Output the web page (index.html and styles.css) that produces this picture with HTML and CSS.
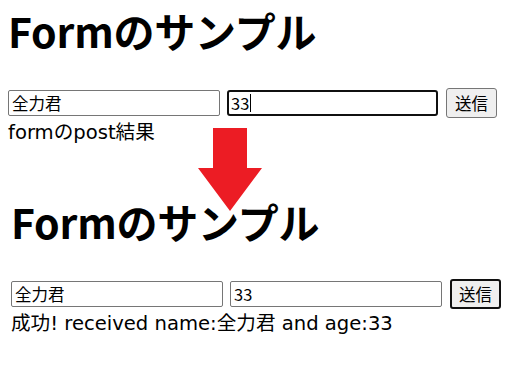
FILE: index.html
```html
<!DOCTYPE html>
<html lang="ja">
<head>
<meta charset="utf-8">
<link rel="stylesheet" href="styles.css">
</head>
<body>
<div class="stage">
  <section class="shot shot-before">
    <h1 class="title">Formのサンプル</h1>
    <form class="row">
      <input class="field" type="text" value="全力君">
      <span class="field field-focus">33<span class="caret"></span></span>
      <button class="btn" type="button">送信</button>
    </form>
    <p class="result">formのpost結果</p>
  </section>
  <section class="shot shot-after">
    <h1 class="title">Formのサンプル</h1>
    <form class="row">
      <input class="field" type="text" value="全力君">
      <input class="field" type="text" value="33">
      <button class="btn btn-focus" type="button">送信</button>
    </form>
    <p class="result">成功! received name:全力君 and age:33</p>
  </section>
  <svg class="arrow" width="66" height="84" viewBox="0 0 66 84">
    <path d="M15 0 H49 V40 H64 L32 83 L0 40 H15 Z" fill="#ec1c24"/>
  </svg>
</div>
</body>
</html>
```

FILE: styles.css
```css
html, body {
  margin: 0;
  padding: 0;
  background: #ffffff;
}
body {
  font-family: "Noto Sans CJK JP", "Noto Sans", sans-serif;
  color: #000;
}
.stage {
  position: relative;
  width: 520px;
  height: 367px;
  overflow: hidden;
  display: flex;
  flex-direction: column;
}
.shot {
  flex: 0 0 auto;
  height: 191px;
  padding-left: 8px;
  box-sizing: border-box;
}
.shot-after {
  padding-left: 11px;
}
.title {
  margin: 0;
  height: 86px;
  padding-top: 2px;
  font-size: 41px;
  font-weight: 700;
  line-height: 56px;
  letter-spacing: -0.2px;
}
.row {
  display: flex;
  align-items: center;
  gap: 7px;
  height: 30px;
  margin: 0;
}
.field {
  box-sizing: border-box;
  width: 212px;
  height: 26px;
  border: 1px solid #767676;
  border-radius: 2px;
  padding: 0 3px;
  font-family: "Noto Sans CJK JP", sans-serif;
  font-size: 16.5px;
  line-height: 24px;
  color: #000;
  background: #fff;
  margin: 0;
  outline: none;
}
.field-focus {
  display: flex;
  align-items: center;
  width: 211px;
  border: 2px solid #101010;
  border-radius: 3px;
  padding: 0 2px;
}
.caret {
  display: inline-block;
  width: 1px;
  height: 18px;
  background: #000;
  margin-left: 1px;
}
.btn {
  box-sizing: border-box;
  width: 51px;
  height: 30px;
  margin-left: 1px;
  border: 1px solid #767676;
  border-radius: 3px;
  background: #efefef;
  font-family: "Noto Sans CJK JP", sans-serif;
  font-size: 16.5px;
  color: #000;
  padding: 0;
}
.btn-focus {
  border: 2px solid #101010;
}
.result {
  margin: 0;
  padding-top: 2px;
  font-family: "DejaVu Sans", "Noto Sans CJK JP", sans-serif;
  font-size: 19.6px;
  line-height: 26px;
}
.arrow {
  position: absolute;
  left: 198px;
  top: 128px;
}
```
